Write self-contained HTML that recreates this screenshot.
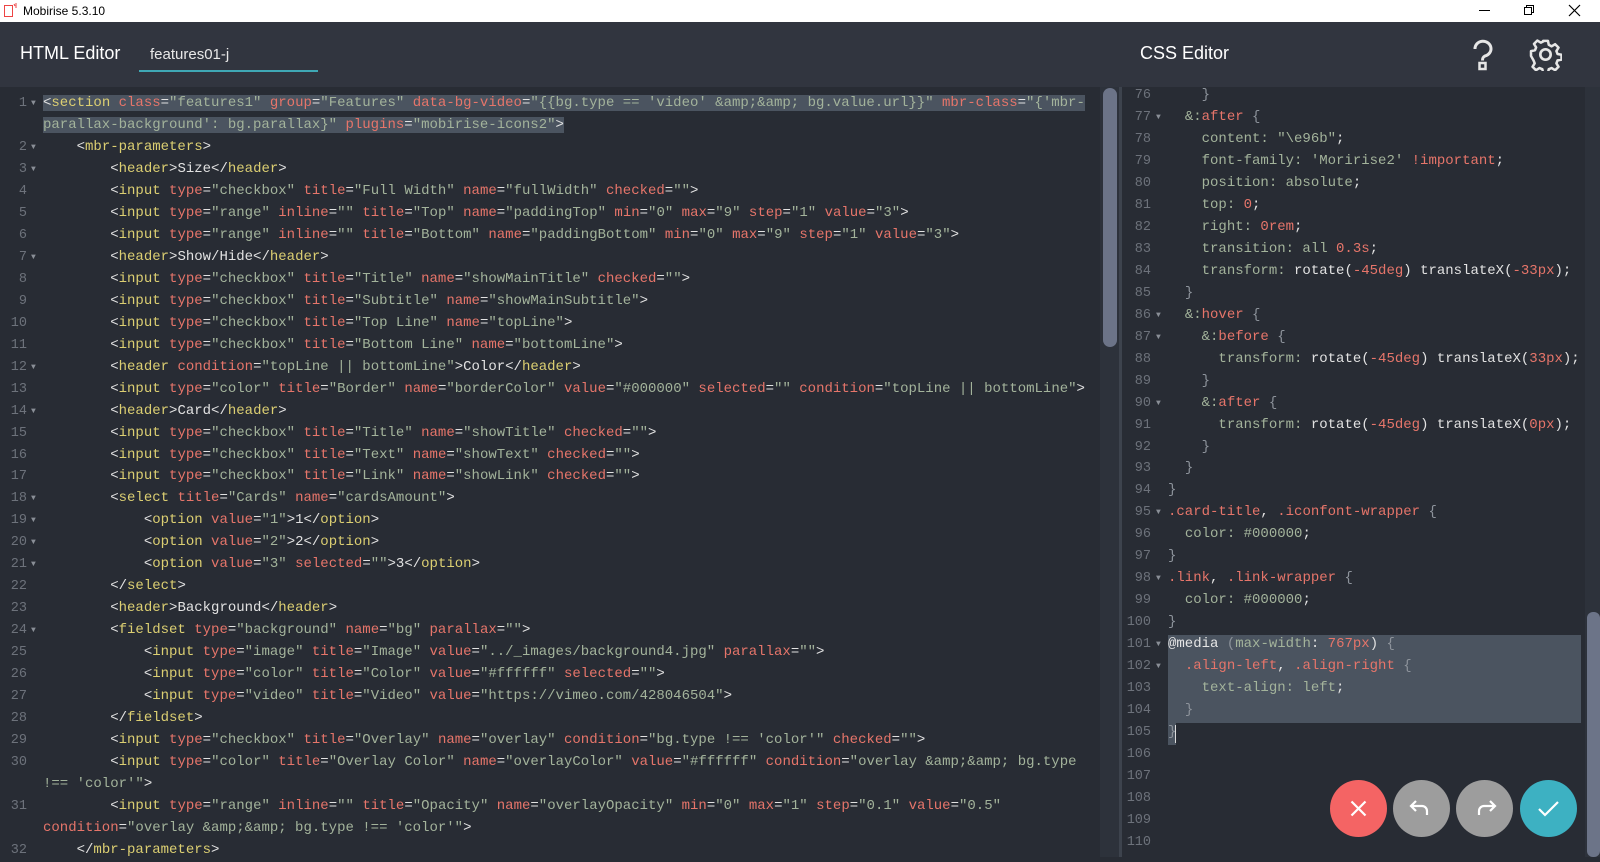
<!DOCTYPE html>
<html><head><meta charset="utf-8"><style>
body{margin:0;width:1600px;height:857px;overflow:hidden;background:#282c34;font-family:"Liberation Sans",sans-serif;position:relative}
.tb{position:absolute;left:0;top:0;width:1600px;height:22px;background:#fff;color:#000;font-size:12px}
.hd{position:absolute;left:0;top:22px;width:1600px;height:65px;background:#31353f}
.code{position:absolute;font-family:"Liberation Mono",monospace;font-size:14px;line-height:21.97px;white-space:pre;color:#e2e2e2}
.gut{position:absolute;font-family:"Liberation Mono",monospace;font-size:13.5px;line-height:21.97px;white-space:pre;color:#6d727b;text-align:right}
.f{position:absolute;font-family:"Liberation Mono",monospace;font-size:8px;line-height:21.97px;white-space:pre;color:#8a8f97}
.t{color:#dccf72}.a{color:#e6756a}.s{color:#a3b39b}.w{color:#e6e6e6}.g{color:#8d939b}
.btn{position:absolute;top:780px;width:57px;height:57px;border-radius:50%}
</style></head><body>
<div class="tb">
<svg style="position:absolute;left:3px;top:2px" width="16" height="16" viewBox="0 0 16 16"><rect x="1.5" y="3.5" width="8" height="11" fill="none" stroke="#e44" stroke-width="1"/><path d="M11 2l1 2M13 1v3M14 5l-2 0" stroke="#e44" stroke-width="1"/></svg>
<span style="position:absolute;left:23px;top:4px">Mobirise 5.3.10</span>
<span style="position:absolute;left:1479px;top:10px;width:11px;height:1px;background:#000"></span>
<svg style="position:absolute;left:1523px;top:4px" width="12" height="12"><rect x="1.5" y="3.5" width="7" height="7" fill="none" stroke="#000"/><path d="M3.5 3.5V1.5h7v7h-2" fill="none" stroke="#000"/></svg>
<svg style="position:absolute;left:1568px;top:4px" width="13" height="13"><path d="M1 1L12 12M12 1L1 12" stroke="#000" stroke-width="1.2"/></svg>
</div>
<div class="hd">
<div style="position:absolute;left:20px;top:21px;color:#fff;font-size:18px">HTML Editor</div>
<div style="position:absolute;left:150px;top:24px;color:#e8e8e8;font-size:15px">features01-j</div>
<div style="position:absolute;left:139px;top:48px;width:179px;height:2px;background:#3fa8b5"></div>
<div style="position:absolute;left:1140px;top:21px;color:#fff;font-size:18px">CSS Editor</div>
<svg style="position:absolute;left:1469px;top:17px" width="28" height="33" viewBox="0 0 28 33"><path d="M6 10a8 7.5 0 1 1 10 7c-2 1-2.5 2-2.5 4.5" fill="none" stroke="#e6e6e6" stroke-width="3"/><rect x="10.5" y="24" width="6" height="6" fill="none" stroke="#e6e6e6" stroke-width="2.5"/></svg>
<svg style="position:absolute;left:1529px;top:16px" width="33" height="33" viewBox="0 0 32 32"><g fill="none" stroke="#e6e6e6" stroke-width="2.6" stroke-linejoin="round"><path d="M13.5 3h5l.8 4 3 1.6 3.6-2.2 3.5 3.5-2.2 3.6 1.2 3 4.1.8v5l-4.1.8-1.2 3 2.2 3.6-3.5 3.5-3.6-2.2-3 1.2-.8 4.1h-5l-.8-4.1-3-1.2-3.6 2.2-3.5-3.5 2.2-3.6-1.2-3L1 18.5v-5l4.1-.8 1.2-3-2.2-3.6 3.5-3.5 3.6 2.2 3-1.6z" transform="translate(1 0) scale(.94)"/><circle cx="16" cy="16" r="5"/></g></svg>
</div>
<div style="position:absolute;left:1100px;top:87px;width:19px;height:770px;background:#2d323b"></div>
<div style="position:absolute;left:1103px;top:88px;width:14px;height:259px;border-radius:7px;background:#6c7488"></div>
<div style="position:absolute;left:1119px;top:87px;width:3px;height:770px;background:#3d434d"></div>
<div style="position:absolute;left:1585px;top:87px;width:15px;height:770px;background:#2d323b"></div>
<div style="position:absolute;left:1587px;top:612px;width:13px;height:245px;border-radius:6px;background:#6c7488"></div>

<div class="gut" style="left:0;top:93px;width:27px">1

2
3
4
5
6
7
8
9
10
11
12
13
14
15
16
17
18
19
20
21
22
23
24
25
26
27
28
29
30

31

32</div>
<div class="f" style="left:31px;top:93px">▼

▼
▼



▼




▼

▼



▼
▼
▼
▼


▼</div>
<div class="code" style="left:43px;top:93px"><span style="background:#4b5460">&lt;<span class="t">section</span> <span class="a">class</span>=<span class="s">"features1"</span> <span class="a">group</span>=<span class="s">"Features"</span> <span class="a">data-bg-video</span>=<span class="s">"{{bg.type == 'video' &amp;amp;&amp;amp; bg.value.url}}"</span> <span class="a">mbr-class</span>=<span class="s">"{'mbr-</span></span>
<span style="background:#4b5460"><span class="s">parallax-background': bg.parallax}"</span> <span class="a">plugins</span>=<span class="s">"mobirise-icons2"</span>&gt;</span>
    &lt;<span class="t">mbr-parameters</span>&gt;
        &lt;<span class="t">header</span>&gt;Size&lt;/<span class="t">header</span>&gt;
        &lt;<span class="t">input</span> <span class="a">type</span>=<span class="s">"checkbox"</span> <span class="a">title</span>=<span class="s">"Full Width"</span> <span class="a">name</span>=<span class="s">"fullWidth"</span> <span class="a">checked</span>=<span class="s">""</span>&gt;
        &lt;<span class="t">input</span> <span class="a">type</span>=<span class="s">"range"</span> <span class="a">inline</span>=<span class="s">""</span> <span class="a">title</span>=<span class="s">"Top"</span> <span class="a">name</span>=<span class="s">"paddingTop"</span> <span class="a">min</span>=<span class="s">"0"</span> <span class="a">max</span>=<span class="s">"9"</span> <span class="a">step</span>=<span class="s">"1"</span> <span class="a">value</span>=<span class="s">"3"</span>&gt;
        &lt;<span class="t">input</span> <span class="a">type</span>=<span class="s">"range"</span> <span class="a">inline</span>=<span class="s">""</span> <span class="a">title</span>=<span class="s">"Bottom"</span> <span class="a">name</span>=<span class="s">"paddingBottom"</span> <span class="a">min</span>=<span class="s">"0"</span> <span class="a">max</span>=<span class="s">"9"</span> <span class="a">step</span>=<span class="s">"1"</span> <span class="a">value</span>=<span class="s">"3"</span>&gt;
        &lt;<span class="t">header</span>&gt;Show/Hide&lt;/<span class="t">header</span>&gt;
        &lt;<span class="t">input</span> <span class="a">type</span>=<span class="s">"checkbox"</span> <span class="a">title</span>=<span class="s">"Title"</span> <span class="a">name</span>=<span class="s">"showMainTitle"</span> <span class="a">checked</span>=<span class="s">""</span>&gt;
        &lt;<span class="t">input</span> <span class="a">type</span>=<span class="s">"checkbox"</span> <span class="a">title</span>=<span class="s">"Subtitle"</span> <span class="a">name</span>=<span class="s">"showMainSubtitle"</span>&gt;
        &lt;<span class="t">input</span> <span class="a">type</span>=<span class="s">"checkbox"</span> <span class="a">title</span>=<span class="s">"Top Line"</span> <span class="a">name</span>=<span class="s">"topLine"</span>&gt;
        &lt;<span class="t">input</span> <span class="a">type</span>=<span class="s">"checkbox"</span> <span class="a">title</span>=<span class="s">"Bottom Line"</span> <span class="a">name</span>=<span class="s">"bottomLine"</span>&gt;
        &lt;<span class="t">header</span> <span class="a">condition</span>=<span class="s">"topLine || bottomLine"</span>&gt;Color&lt;/<span class="t">header</span>&gt;
        &lt;<span class="t">input</span> <span class="a">type</span>=<span class="s">"color"</span> <span class="a">title</span>=<span class="s">"Border"</span> <span class="a">name</span>=<span class="s">"borderColor"</span> <span class="a">value</span>=<span class="s">"#000000"</span> <span class="a">selected</span>=<span class="s">""</span> <span class="a">condition</span>=<span class="s">"topLine || bottomLine"</span>&gt;
        &lt;<span class="t">header</span>&gt;Card&lt;/<span class="t">header</span>&gt;
        &lt;<span class="t">input</span> <span class="a">type</span>=<span class="s">"checkbox"</span> <span class="a">title</span>=<span class="s">"Title"</span> <span class="a">name</span>=<span class="s">"showTitle"</span> <span class="a">checked</span>=<span class="s">""</span>&gt;
        &lt;<span class="t">input</span> <span class="a">type</span>=<span class="s">"checkbox"</span> <span class="a">title</span>=<span class="s">"Text"</span> <span class="a">name</span>=<span class="s">"showText"</span> <span class="a">checked</span>=<span class="s">""</span>&gt;
        &lt;<span class="t">input</span> <span class="a">type</span>=<span class="s">"checkbox"</span> <span class="a">title</span>=<span class="s">"Link"</span> <span class="a">name</span>=<span class="s">"showLink"</span> <span class="a">checked</span>=<span class="s">""</span>&gt;
        &lt;<span class="t">select</span> <span class="a">title</span>=<span class="s">"Cards"</span> <span class="a">name</span>=<span class="s">"cardsAmount"</span>&gt;
            &lt;<span class="t">option</span> <span class="a">value</span>=<span class="s">"1"</span>&gt;1&lt;/<span class="t">option</span>&gt;
            &lt;<span class="t">option</span> <span class="a">value</span>=<span class="s">"2"</span>&gt;2&lt;/<span class="t">option</span>&gt;
            &lt;<span class="t">option</span> <span class="a">value</span>=<span class="s">"3"</span> <span class="a">selected</span>=<span class="s">""</span>&gt;3&lt;/<span class="t">option</span>&gt;
        &lt;/<span class="t">select</span>&gt;
        &lt;<span class="t">header</span>&gt;Background&lt;/<span class="t">header</span>&gt;
        &lt;<span class="t">fieldset</span> <span class="a">type</span>=<span class="s">"background"</span> <span class="a">name</span>=<span class="s">"bg"</span> <span class="a">parallax</span>=<span class="s">""</span>&gt;
            &lt;<span class="t">input</span> <span class="a">type</span>=<span class="s">"image"</span> <span class="a">title</span>=<span class="s">"Image"</span> <span class="a">value</span>=<span class="s">"../_images/background4.jpg"</span> <span class="a">parallax</span>=<span class="s">""</span>&gt;
            &lt;<span class="t">input</span> <span class="a">type</span>=<span class="s">"color"</span> <span class="a">title</span>=<span class="s">"Color"</span> <span class="a">value</span>=<span class="s">"#ffffff"</span> <span class="a">selected</span>=<span class="s">""</span>&gt;
            &lt;<span class="t">input</span> <span class="a">type</span>=<span class="s">"video"</span> <span class="a">title</span>=<span class="s">"Video"</span> <span class="a">value</span>=<span class="s">"https://vimeo.com/428046504"</span>&gt;
        &lt;/<span class="t">fieldset</span>&gt;
        &lt;<span class="t">input</span> <span class="a">type</span>=<span class="s">"checkbox"</span> <span class="a">title</span>=<span class="s">"Overlay"</span> <span class="a">name</span>=<span class="s">"overlay"</span> <span class="a">condition</span>=<span class="s">"bg.type !== 'color'"</span> <span class="a">checked</span>=<span class="s">""</span>&gt;
        &lt;<span class="t">input</span> <span class="a">type</span>=<span class="s">"color"</span> <span class="a">title</span>=<span class="s">"Overlay Color"</span> <span class="a">name</span>=<span class="s">"overlayColor"</span> <span class="a">value</span>=<span class="s">"#ffffff"</span> <span class="a">condition</span>=<span class="s">"overlay &amp;amp;&amp;amp; bg.type</span>
<span class="s">!== 'color'"</span>&gt;
        &lt;<span class="t">input</span> <span class="a">type</span>=<span class="s">"range"</span> <span class="a">inline</span>=<span class="s">""</span> <span class="a">title</span>=<span class="s">"Opacity"</span> <span class="a">name</span>=<span class="s">"overlayOpacity"</span> <span class="a">min</span>=<span class="s">"0"</span> <span class="a">max</span>=<span class="s">"1"</span> <span class="a">step</span>=<span class="s">"0.1"</span> <span class="a">value</span>=<span class="s">"0.5"</span>
<span class="a">condition</span>=<span class="s">"overlay &amp;amp;&amp;amp; bg.type !== 'color'"</span>&gt;
    &lt;/<span class="t">mbr-parameters</span>&gt;</div>

<div style="position:absolute;left:1168px;top:635px;width:413px;height:88px;background:#4b5460"></div>
<div style="position:absolute;left:1168px;top:723px;width:8px;height:22px;background:#4b5460"></div>
<div style="position:absolute;left:1175px;top:725px;width:1px;height:18px;background:#ddd"></div>
<div class="gut" style="left:1122px;top:85px;width:29px">76
77
78
79
80
81
82
83
84
85
86
87
88
89
90
91
92
93
94
95
96
97
98
99
100
101
102
103
104
105
106
107
108
109
110</div>
<div class="f" style="left:1156px;top:85px">
▼








▼
▼


▼




▼


▼


▼
▼</div>
<div class="code" style="left:1168px;top:85px">    <span class="g">}</span>
  <span class="s">&amp;:</span><span class="a">after</span> <span class="g">{</span>
    <span class="s">content: "\e96b"</span>;
    <span class="s">font-family: 'Moririse2'</span> <span class="a">!important</span>;
    <span class="s">position: absolute</span>;
    <span class="s">top: </span><span class="a">0</span>;
    <span class="s">right: </span><span class="a">0rem</span>;
    <span class="s">transition: all </span><span class="a">0.3s</span>;
    <span class="s">transform: </span>rotate(<span class="a">-45deg</span>) translateX(<span class="a">-33px</span>);
  <span class="g">}</span>
  <span class="s">&amp;:</span><span class="a">hover</span> <span class="g">{</span>
    <span class="s">&amp;:</span><span class="a">before</span> <span class="g">{</span>
      <span class="s">transform: </span>rotate(<span class="a">-45deg</span>) translateX(<span class="a">33px</span>);
    <span class="g">}</span>
    <span class="s">&amp;:</span><span class="a">after</span> <span class="g">{</span>
      <span class="s">transform: </span>rotate(<span class="a">-45deg</span>) translateX(<span class="a">0px</span>);
    <span class="g">}</span>
  <span class="g">}</span>
<span class="g">}</span>
<span class="a">.card-title</span>, <span class="a">.iconfont-wrapper</span> <span class="g">{</span>
  <span class="s">color: #000000</span>;
<span class="g">}</span>
<span class="a">.link</span>, <span class="a">.link-wrapper</span> <span class="g">{</span>
  <span class="s">color: #000000</span>;
<span class="g">}</span>
<span class="w">@media</span> <span class="g">(</span><span class="s">max-width</span>: <span class="a">767px</span>) <span class="g">{</span>
  <span class="a">.align-left</span>, <span class="a">.align-right</span> <span class="g">{</span>
    <span class="s">text-align: left</span>;
  <span class="g">}</span>
<span class="g">}</span></div>

<div class="btn" style="left:1330px;background:#f46464"><svg width="57" height="57"><path d="M21.5 21.5L35.5 35.5M35.5 21.5L21.5 35.5" stroke="#fff" stroke-width="2.2"/></svg></div>
<div class="btn" style="left:1393px;background:#9d9d9d"><svg width="57" height="57"><path d="M23 21l-5 5 5 5M18 26h11a5 5 0 0 1 5 5v4" fill="none" stroke="#fff" stroke-width="2.2"/></svg></div>
<div class="btn" style="left:1456px;background:#9d9d9d"><svg width="57" height="57"><path d="M34 21l5 5-5 5M39 26H28a5 5 0 0 0-5 5v4" fill="none" stroke="#fff" stroke-width="2.2"/></svg></div>
<div class="btn" style="left:1520px;background:#3db1c2"><svg width="57" height="57"><path d="M19 29l6 6 13-13" fill="none" stroke="#fff" stroke-width="2.2"/></svg></div>
</body></html>
